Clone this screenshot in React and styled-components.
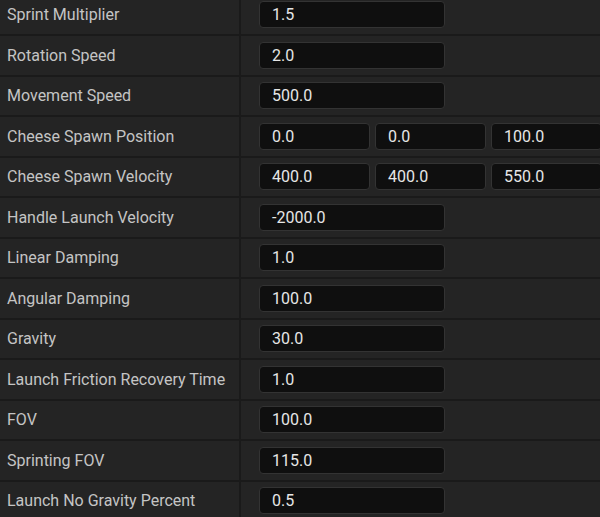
import React from 'react'
import styled, { createGlobalStyle } from 'styled-components'

const GlobalStyle = createGlobalStyle`
  html, body {
    margin: 0;
    padding: 0;
    background: #242424;
    overflow: hidden;
  }
  body {
    font-family: Roboto, 'Noto Sans', sans-serif;
  }
`

const Panel = styled.div`
  width: 600px;
  height: 517px;
  overflow: hidden;
  background: #242424;
`

const List = styled.div`
  margin-top: -4.5px;
`

const Row = styled.div`
  display: grid;
  grid-template-columns: 239px 2px 1fr;
  height: 40.5px;
  box-sizing: border-box;
  border-bottom: 2px solid #1a1a1a;
`

const Label = styled.div`
  display: flex;
  align-items: center;
  padding-left: 7px;
  font-size: 16px;
  color: #c4c4c4;
  white-space: nowrap;
`

const Divider = styled.div`
  background: #1a1a1a;
`

const Values = styled.div`
  display: flex;
  align-items: center;
  gap: 5px;
  padding-left: 18px;
  overflow: hidden;
`

const Field = styled.div`
  flex: none;
  width: ${p => p.$w}px;
  height: 27px;
  box-sizing: border-box;
  display: flex;
  align-items: center;
  padding-left: 12px;
  background: #0f0f0f;
  border: 1px solid #333;
  border-radius: 4px;
  font-size: 16px;
  color: #e6e6e6;
`

const props = [
  ['Sprint Multiplier', ['1.5']],
  ['Rotation Speed', ['2.0']],
  ['Movement Speed', ['500.0']],
  ['Cheese Spawn Position', ['0.0', '0.0', '100.0']],
  ['Cheese Spawn Velocity', ['400.0', '400.0', '550.0']],
  ['Handle Launch Velocity', ['-2000.0']],
  ['Linear Damping', ['1.0']],
  ['Angular Damping', ['100.0']],
  ['Gravity', ['30.0']],
  ['Launch Friction Recovery Time', ['1.0']],
  ['FOV', ['100.0']],
  ['Sprinting FOV', ['115.0']],
  ['Launch No Gravity Percent', ['0.5']],
]

export default function App() {
  return (
    <Panel>
      <GlobalStyle />
      <List>
        {props.map(([name, vals]) => (
          <Row key={name}>
            <Label>{name}</Label>
            <Divider />
            <Values>
              {vals.map((v, i) => (
                <Field key={i} $w={vals.length > 1 ? 111 : 186}>
                  {v}
                </Field>
              ))}
            </Values>
          </Row>
        ))}
      </List>
    </Panel>
  )
}
